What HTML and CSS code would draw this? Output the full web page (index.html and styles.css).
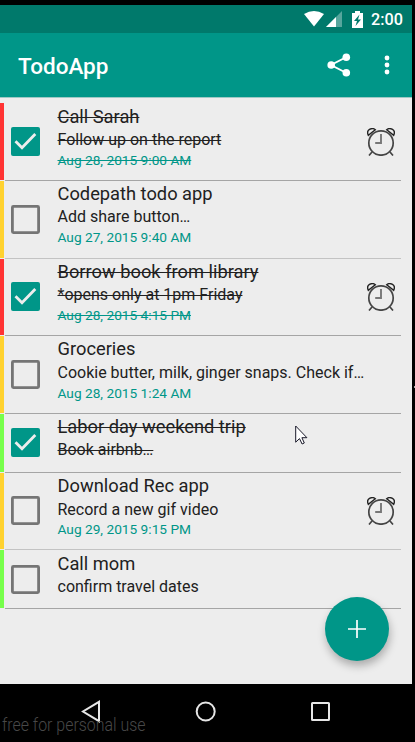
FILE: index.html
```html
<!DOCTYPE html>
<html lang="en">
<head>
<meta charset="utf-8">
<title>TodoApp</title>
<link rel="stylesheet" href="styles.css">
</head>
<body>
<svg class="defs" width="0" height="0" aria-hidden="true">
  <symbol id="on" viewBox="0 0 29 29"><rect width="29" height="29" rx="2" fill="#009688"/><path d="M4.500 14.200l6.500 6.500L24.300 7" fill="none" stroke="#ededed" stroke-width="2.800"/></symbol>
  <symbol id="off" viewBox="0 0 29 29"><rect x="1.400" y="1.400" width="26.200" height="26.200" rx="1" fill="none" stroke="#757575" stroke-width="2.800"/></symbol>
  <symbol id="alarm" viewBox="0 0 28 28">
    <g fill="none" stroke="#454545">
      <circle cx="14" cy="15" r="12.200" stroke-width="1.700"/>
      <path d="M14 6v9H8.200" stroke="#777" stroke-width="1.900"/>
      <path d="M5 24l-3 3.500M23 24l3 3.500" stroke-width="1.700"/>
      <path d="M1.300 7.300C.3 5 .5 2.500 2.500 1.400 4.500.4 7 .5 8.300 1.700ZM26.700 7.300c1-2.300.8-4.800-1.200-5.900C23.500.4 21 .5 19.700 1.700Z" stroke="#222" stroke-width="1.400"/>
    </g>
  </symbol>
</svg>
<div class="phone">
  <div class="status">
    <svg width="20" height="16" viewBox="0 0 20 16"><path d="M0 3Q10-3 20 3L10 15.500Z" fill="#fff"/></svg>
    <svg class="signal" width="16" height="16" viewBox="0 0 16 16"><path d="M16 0v16H0Z" fill="#57a69d"/><path d="M10 6v10H0Z" fill="#fff"/></svg>
    <svg class="battery" width="11" height="17" viewBox="0 0 11 17"><path d="M3 0h5v2h3v15H0V2h3Z" fill="#fff"/><path d="M7.500 3.500L2 10h3l-1.500 5L9 8.500H6Z" fill="#00796b"/></svg>
    <span class="clock">2:00</span>
  </div>
  <header class="toolbar">
    <h1>TodoApp</h1>
    <svg width="24" height="24" viewBox="0 0 24 24" fill="#fff"><path d="M19.500 4L4 12l15.500 8" fill="none" stroke="#fff" stroke-width="1.900"/><circle cx="19.300" cy="4.300" r="3.800"/><circle cx="4.200" cy="12" r="3.800"/><circle cx="19.300" cy="19.800" r="3.800"/></svg>
    <svg class="more" width="6" height="20" viewBox="0 0 6 20" fill="#fff"><circle cx="3" cy="3" r="2.400"/><circle cx="3" cy="10" r="2.400"/><circle cx="3" cy="17" r="2.400"/></svg>
  </header>
  <main class="list">
    <article class="row high done lower"><svg class="check"><use href="#on"/></svg><div class="text"><h2>Call Sarah</h2><p>Follow up on the report</p><time>Aug 28, 2015 9:00 AM</time></div><svg class="alarm"><use href="#alarm"/></svg></article>
    <article class="row mid light"><svg class="check"><use href="#off"/></svg><div class="text"><h2>Codepath todo app</h2><p>Add share button…</p><time>Aug 27, 2015 9:40 AM</time></div></article>
    <article class="row high done short"><svg class="check"><use href="#on"/></svg><div class="text"><h2>Borrow book from library</h2><p>*opens only at 1pm Friday</p><time>Aug 28, 2015 4:15 PM</time></div><svg class="alarm"><use href="#alarm"/></svg></article>
    <article class="row mid spaced"><svg class="check"><use href="#off"/></svg><div class="text"><h2>Groceries</h2><p>Cookie butter, milk, ginger snaps. Check if…</p><time>Aug 28, 2015 1:24 AM</time></div></article>
    <article class="row low done small"><svg class="check"><use href="#on"/></svg><div class="text"><h2>Labor day weekend trip</h2><p>Book airbnb…</p></div></article>
    <article class="row mid short light spaced tight"><svg class="check"><use href="#off"/></svg><div class="text"><h2>Download Rec app</h2><p>Record a new gif video</p><time>Aug 29, 2015 9:15 PM</time></div><svg class="alarm"><use href="#alarm"/></svg></article>
    <article class="row low small lower last"><svg class="check"><use href="#off"/></svg><div class="text"><h2>Call mom</h2><p>confirm travel dates</p></div></article>
  </main>
  <nav class="nav">
    <svg width="20" height="23" viewBox="0 0 20 23"><path d="M18 1.800v19.400L2 11.500Z"/></svg>
    <svg width="22" height="22" viewBox="0 0 22 22"><circle cx="10.700" cy="11.500" r="9"/></svg>
    <svg width="20" height="20" viewBox="0 0 20 20"><rect x="1" y="2" width="17" height="17" rx=".5"/></svg>
  </nav>
  <button class="fab" aria-label="Add"><svg width="18" height="18" viewBox="0 0 18 18"><path d="M9 0v18M0 9h18" stroke="#fff" stroke-width="1.700"/></svg></button>
  <svg class="cursor" width="13" height="20" viewBox="0 0 13 20"><path d="M.7 1v16.200l3.800-3.600 2.600 5.400 2.200-1-2.400-5.300h5Z" fill="#fff" stroke="#1a1a2a" stroke-width="1"/></svg>
  <div class="watermark">free for personal use</div>
  <i class="speck"></i>
</div>
</body>
</html>
```

FILE: styles.css
```css
* { box-sizing: border-box; }
body { margin: 0; background: #000; font-family: Roboto, sans-serif; overflow: hidden; }
.defs { position: absolute; }
.phone { position: relative; width: 415px; height: 742px; padding: 5px 3px 0 0; overflow: hidden; }
.status { display: flex; align-items: center; height: 28px; padding: 0 8px 0 304px; background: #00796b; color: #fff; }
.signal { margin-left: 2px; }
.battery { margin-left: 10px; }
.clock { margin-left: 8px; font-size: 16.2px; font-weight: 500; line-height: 28px; padding-top: 1px; }
.toolbar { display: flex; align-items: center; height: 65px; padding: 0 22px 0 18px; background: #009688; border-bottom: 1px solid #9fc9c5; }
.toolbar h1 { flex: 1; margin: 2px 0 0; font-size: 22.5px; font-weight: 500; line-height: 28px; color: #fff; }
.toolbar .more { margin-left: 33px; }
.list { height: 586px; padding-top: 5px; background: #ededed; }
.row { display: flex; align-items: flex-start; width: 401px; height: 77px; margin-bottom: 1px; border-left: 4px solid; position: relative; }
.row::after { content: ""; position: absolute; left: 1px; right: 0; bottom: -1px; height: 1px; background: #a5a5a5; }
.row.light::after { background: #c3c3c3; }
.row.short { height: 76px; }
.row.small { height: 58px; }
.high { border-color: #ff3333; }
.mid { border-color: #ffd230; }
.low { border-color: #76ff4b; }
.check { width: 29px; height: 29px; margin: 24px 17.5px 0 7px; flex: none; }
.short .check { margin-top: 23px; }
.small .check { margin-top: 14px; }
.last .check { margin-top: 15px; }
.text { flex: 1; padding-top: 2px; white-space: nowrap; color: #212121; }
.lower .text { padding-top: 3px; }
.text h2, .text p, .text time { display: block; width: max-content; margin: 0; font-weight: 400; }
.text h2 { font-size: 18.3px; line-height: 22px; }
.text p { font-size: 16px; line-height: 24px; }
.spaced .text p { padding-top: 1px; }
.text time { margin-top: -1px; font-size: 13.7px; line-height: 18px; color: #009688; }
.tight .text time { margin-top: -2px; }
.done h2, .done p, .done time { text-decoration: line-through; text-decoration-thickness: 1px; }
.alarm { width: 28px; height: 28px; margin: 25px 6px 0 0; flex: none; }
.short .alarm { margin-top: 24px; }
.nav { display: flex; align-items: center; height: 54px; padding-left: 81px; }
.nav svg { flex: none; fill: none; stroke: #e6e6e6; stroke-width: 2; margin-right: 94px; }
.fab { position: absolute; left: 325px; top: 597px; width: 64px; height: 64px; padding: 0; border: 0; border-radius: 50%; background: #009688; display: grid; place-items: center; box-shadow: 1px 5px 8px rgba(0, 0, 0, .28); }
.cursor { position: absolute; left: 295px; top: 425px; }
.watermark { position: absolute; left: 2px; top: 713px; font-size: 18px; line-height: 24px; font-weight: 300; color: #484848; white-space: nowrap; transform: scaleX(.885); transform-origin: left; }
.speck { position: absolute; left: 414px; top: 386px; width: 1px; height: 2px; background: #aaa; }
```
